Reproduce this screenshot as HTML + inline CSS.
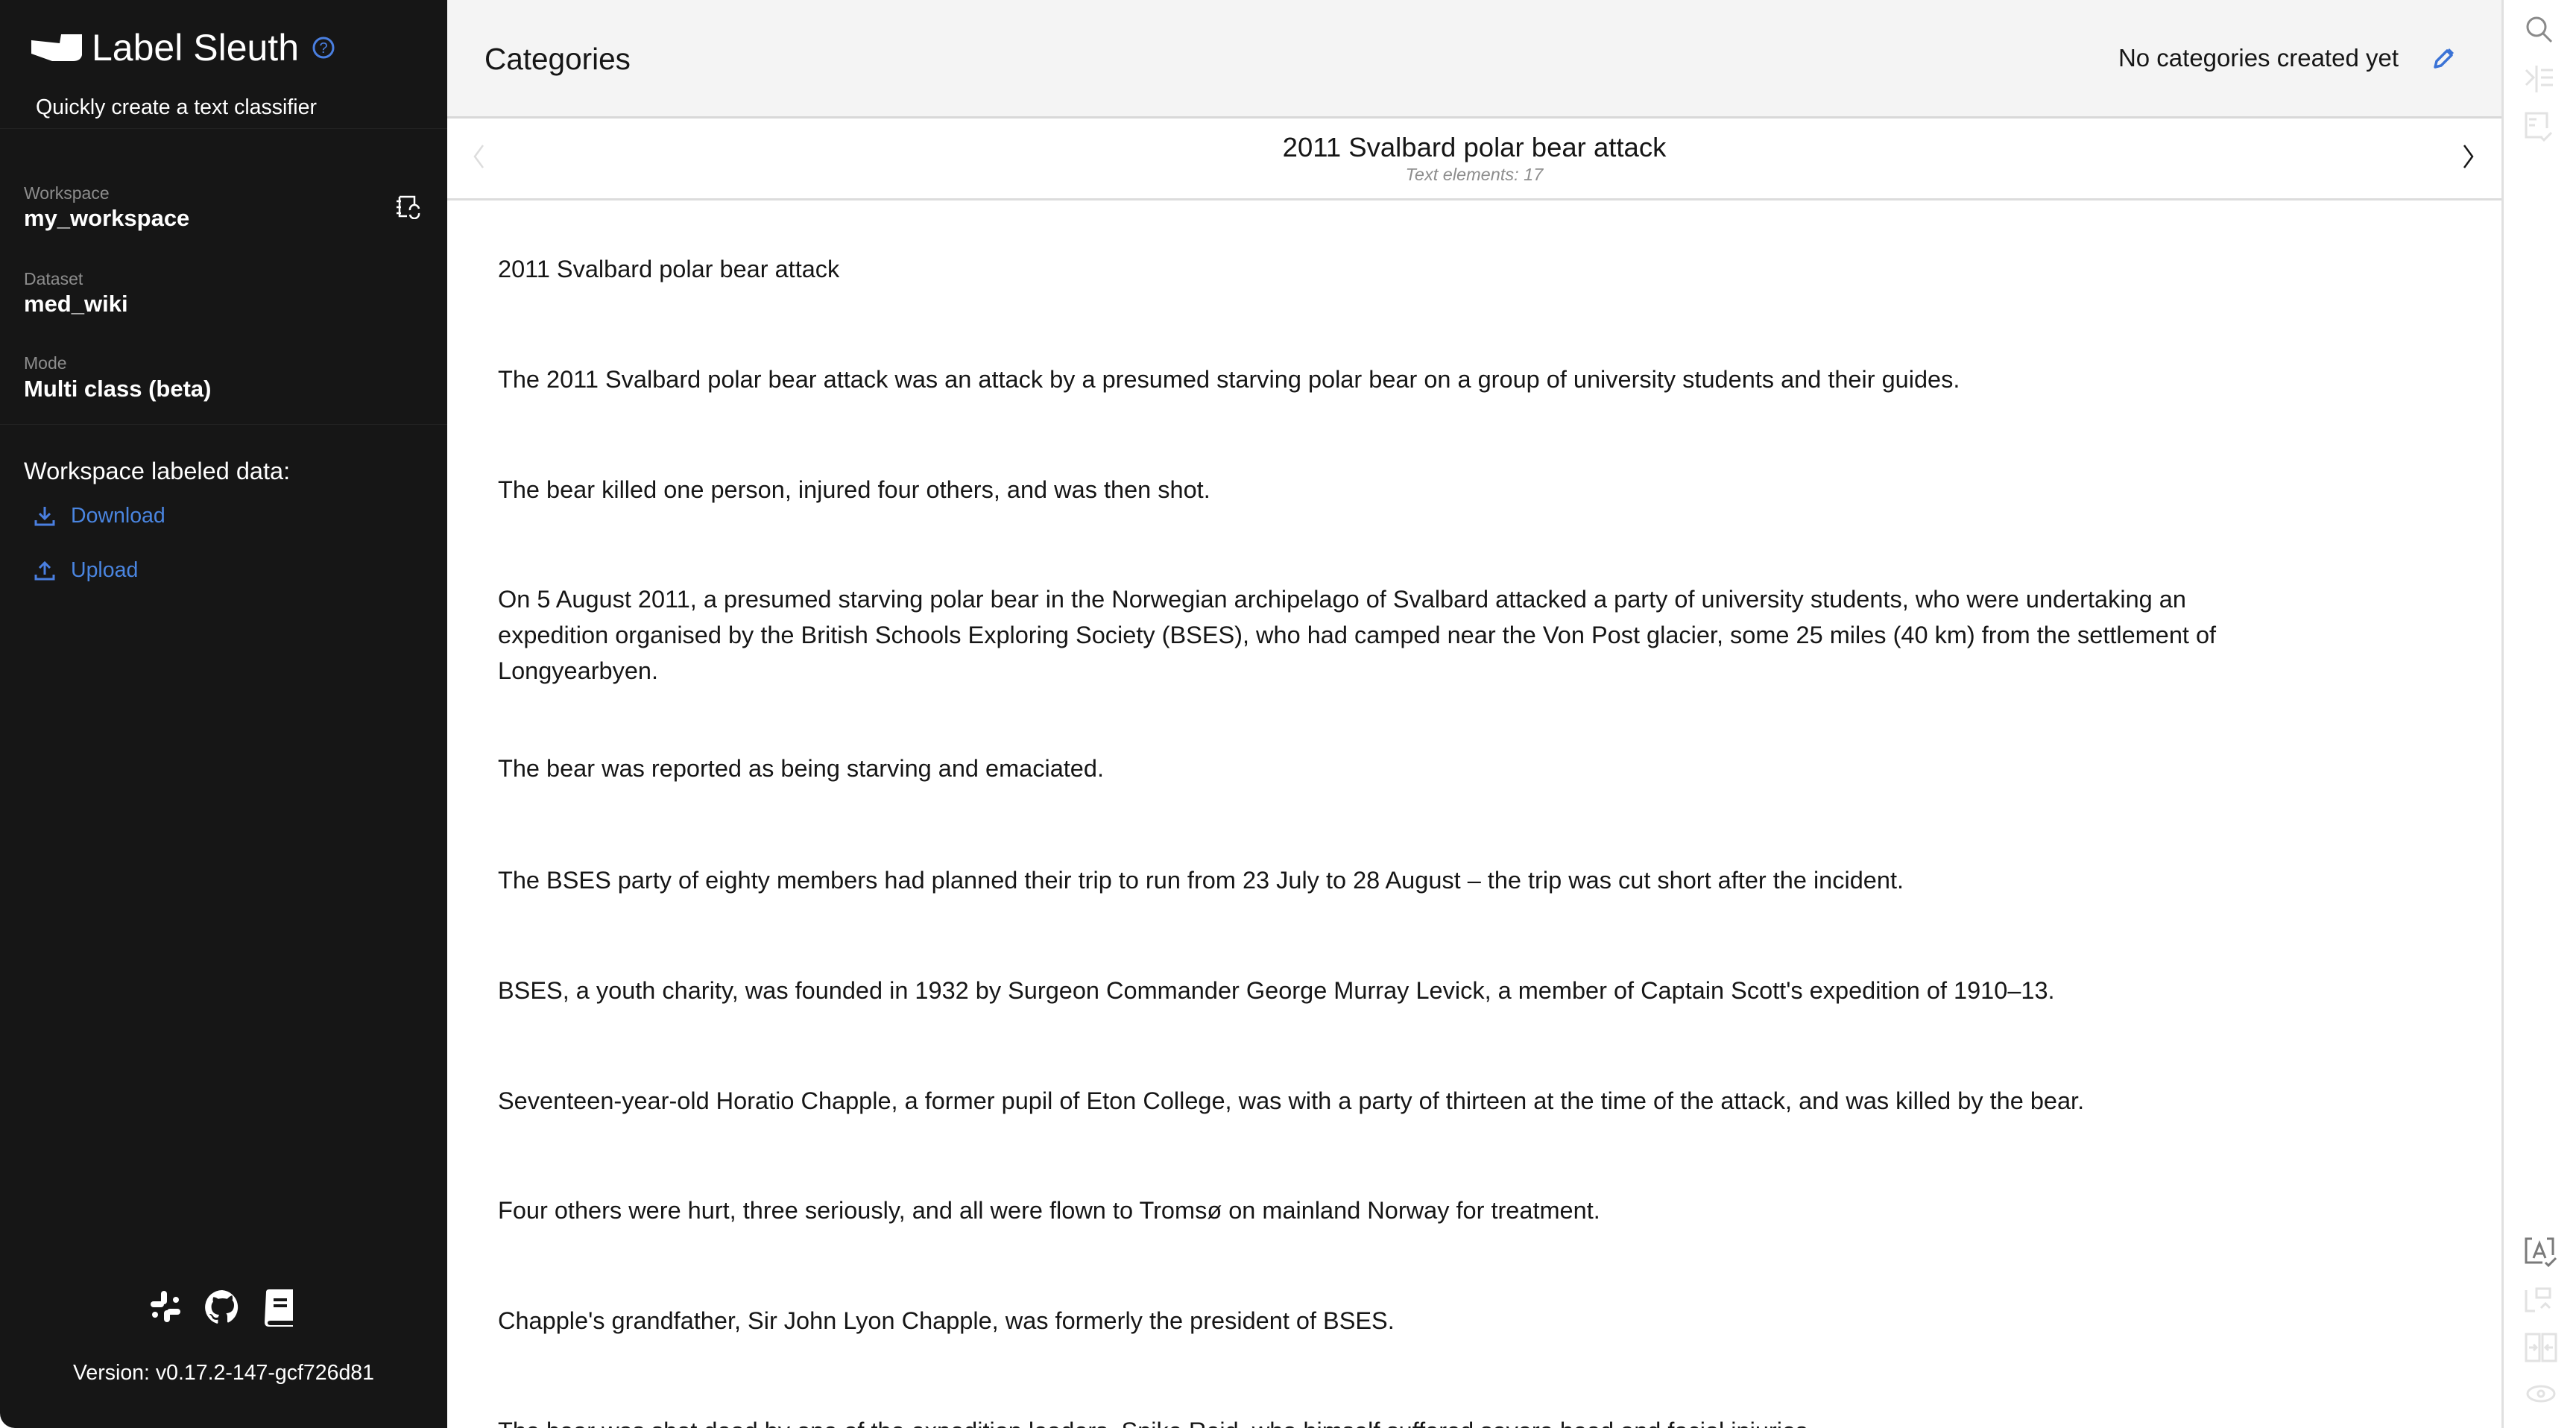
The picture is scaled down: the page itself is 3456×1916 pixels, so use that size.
<!DOCTYPE html>
<html><head><meta charset="utf-8"><style>
*{margin:0;padding:0;box-sizing:border-box}
html,body{width:3456px;height:1916px;overflow:hidden;background:#fff;font-family:"Liberation Sans",sans-serif;color:#161616}
#wrap{position:relative;width:3456px;height:1916px;overflow:hidden}
.side{position:absolute;left:0;top:0;width:600px;height:1916px;background:#161616;color:#fff;border-bottom-left-radius:20px}
.abs{position:absolute;white-space:nowrap}
.lbl{font-size:23px;color:#8d8d8d}
.val{font-size:31px;font-weight:bold}
.hdr{position:absolute;left:600px;top:0;width:2756px;height:159px;background:#f4f4f4;border-bottom:3px solid #d8d8d8}
.doch{position:absolute;left:600px;top:159px;width:2756px;height:110px;border-bottom:3px solid #dcdcdc;background:#fff}
.rail{position:absolute;left:3356px;top:0;width:100px;height:1916px;background:#fff;border-left:3px solid #e0e0e0}
.p{position:absolute;left:668px;font-size:32.5px;line-height:48px;white-space:nowrap;color:#161616}
</style></head><body><div id="wrap">
<div class="side">
  <svg class="abs" style="left:40px;top:44px" width="72" height="40" viewBox="0 0 72 40"><path d="M2 10 L40 14 L42 2 L70 2 L70 30 Q68 38 58 38 L30 38 L2 28 Z" fill="#fff"/></svg>
  <div class="abs" style="left:123px;top:35px;font-size:50px;line-height:58px">Label Sleuth</div>
  <svg class="abs" style="left:418px;top:48px" width="32" height="32" viewBox="0 0 32 32"><circle cx="16" cy="16" r="13" fill="none" stroke="#4a7fe0" stroke-width="3"/><text x="16" y="23" text-anchor="middle" font-size="20" fill="#4a7fe0" font-family="Liberation Sans">?</text></svg>
  <div class="abs" style="left:48px;top:128px;font-size:28.5px">Quickly create a text classifier</div>
  <div style="position:absolute;left:0;top:172px;width:600px;height:1px;background:#222"></div>
  <div class="abs lbl" style="left:32px;top:246px">Workspace</div>
  <div class="abs val" style="left:32px;top:275px">my_workspace</div>
  <svg class="abs" style="left:530px;top:262px" width="36" height="32" viewBox="0 0 36 32" fill="none" stroke="#fff" stroke-width="2.5"><path d="M6 2 H26 V12 M6 2 V28 H16 M2 8 H8 M2 16 H8 M2 24 H8"/><path d="M20 20 A6 6 0 0 1 32 18 M32 24 A6 6 0 0 1 20 26"/></svg>
  <div class="abs lbl" style="left:32px;top:361px">Dataset</div>
  <div class="abs val" style="left:32px;top:390px">med_wiki</div>
  <div class="abs lbl" style="left:32px;top:474px">Mode</div>
  <div class="abs val" style="left:32px;top:504px">Multi class (beta)</div>
  <div style="position:absolute;left:0;top:569px;width:600px;height:1px;background:#222"></div>
  <div class="abs" style="left:32px;top:614px;font-size:32.5px">Workspace labeled data:</div>
  <svg class="abs" style="left:44px;top:676px" width="32" height="32" viewBox="0 0 32 32" fill="none" stroke="#4a7fe0" stroke-width="3"><path d="M16 4 V20 M9 13 L16 20 L23 13 M4 22 V28 H28 V22"/></svg>
  <div class="abs" style="left:95px;top:676px;font-size:28.5px;color:#4a85e0">Download</div>
  <svg class="abs" style="left:44px;top:749px" width="32" height="32" viewBox="0 0 32 32" fill="none" stroke="#4a7fe0" stroke-width="3"><path d="M16 22 V6 M9 13 L16 6 L23 13 M4 22 V28 H28 V22"/></svg>
  <div class="abs" style="left:95px;top:749px;font-size:28.5px;color:#4a85e0">Upload</div>
  <svg class="abs" style="left:200px;top:1730px" width="44" height="46" viewBox="0 0 44 46" fill="#fff"><rect x="16" y="2" width="8" height="18" rx="4"/><rect x="2" y="16" width="18" height="8" rx="4"/><rect x="24" y="26" width="18" height="8" rx="4"/><rect x="20" y="28" width="8" height="16" rx="4"/><rect x="32" y="10" width="8" height="8" rx="4"/><rect x="4" y="30" width="8" height="8" rx="4"/></svg>
  <svg class="abs" style="left:274px;top:1730px" width="48" height="48" viewBox="0 0 24 24" fill="#fff"><path d="M12 .5a11.5 11.5 0 0 0-3.6 22.4c.6.1.8-.3.8-.6v-2c-3.2.7-3.9-1.4-3.9-1.4-.5-1.3-1.3-1.7-1.3-1.7-1-.7.1-.7.1-.7 1.2.1 1.8 1.2 1.8 1.2 1 1.8 2.8 1.3 3.5 1 .1-.8.4-1.3.7-1.6-2.6-.3-5.3-1.3-5.3-5.7 0-1.3.5-2.3 1.2-3.1-.1-.3-.5-1.5.1-3.1 0 0 1-.3 3.3 1.2a11.5 11.5 0 0 1 6 0C17.7 3.9 18.7 4.2 18.7 4.2c.6 1.6.2 2.8.1 3.1.8.8 1.2 1.8 1.2 3.1 0 4.4-2.7 5.4-5.3 5.7.4.4.8 1.1.8 2.2v3.3c0 .3.2.7.8.6A11.5 11.5 0 0 0 12 .5z"/></svg>
  <svg class="abs" style="left:353px;top:1728px" width="44" height="52" viewBox="0 0 44 52"><path d="M4 6 Q4 2 8 2 H40 V44 H10 Q6 44 6 47 Q6 50 10 50 H40 V52 H8 Q2 52 2 46 Z" fill="#fff"/><rect x="14" y="14" width="18" height="4" fill="#161616"/><rect x="14" y="22" width="18" height="4" fill="#161616"/></svg>
  <div class="abs" style="left:0;width:600px;text-align:center;top:1826px;font-size:28.5px">Version: v0.17.2-147-gcf726d81</div>
</div>

<div class="hdr">
  <div class="abs" style="left:50px;top:56px;font-size:40.5px">Categories</div>
  <div class="abs" style="right:138px;top:59px;font-size:33px">No categories created yet</div>
  <svg class="abs" style="left:2663px;top:64px" width="30" height="30" viewBox="0 0 30 30"><path d="M4 26 L6 18 L20 4 L26 10 L12 24 Z" fill="none" stroke="#3b73d6" stroke-width="3.5" stroke-linejoin="round"/><path d="M20 4 L23 1 L29 7 L26 10" fill="#3b73d6"/></svg>
</div>
<div class="doch">
  <svg class="abs" style="left:34px;top:34px" width="16" height="34" viewBox="0 0 16 34"><path d="M14 2 L3 17 L14 32" fill="none" stroke="#ddd" stroke-width="2.5"/></svg>
  <div class="abs" style="left:0;width:2756px;text-align:center;top:18px;font-size:36.5px">2011 Svalbard polar bear attack</div>
  <div class="abs" style="left:0;width:2756px;text-align:center;top:62px;font-size:23.5px;font-style:italic;color:#8d8d8d">Text elements: 17</div>
  <svg class="abs" style="left:2704px;top:34px" width="16" height="34" viewBox="0 0 16 34"><path d="M2 2 L13 17 L2 32" fill="none" stroke="#161616" stroke-width="2.5"/></svg>
</div>

<div class="p" style="top:337px">2011 Svalbard polar bear attack</div>
<div class="p" style="top:485px">The 2011 Svalbard polar bear attack was an attack by a presumed starving polar bear on a group of university students and their guides.</div>
<div class="p" style="top:633px">The bear killed one person, injured four others, and was then shot.</div>
<div class="p" style="top:780px">On 5 August 2011, a presumed starving polar bear in the Norwegian archipelago of Svalbard attacked a party of university students, who were undertaking an<br>expedition organised by the British Schools Exploring Society (BSES), who had camped near the Von Post glacier, some 25 miles (40 km) from the settlement of<br>Longyearbyen.</div>
<div class="p" style="top:1007px">The bear was reported as being starving and emaciated.</div>
<div class="p" style="top:1157px">The BSES party of eighty members had planned their trip to run from 23 July to 28 August – the trip was cut short after the incident.</div>
<div class="p" style="top:1305px">BSES, a youth charity, was founded in 1932 by Surgeon Commander George Murray Levick, a member of Captain Scott's expedition of 1910–13.</div>
<div class="p" style="top:1453px">Seventeen-year-old Horatio Chapple, a former pupil of Eton College, was with a party of thirteen at the time of the attack, and was killed by the bear.</div>
<div class="p" style="top:1600px">Four others were hurt, three seriously, and all were flown to Tromsø on mainland Norway for treatment.</div>
<div class="p" style="top:1748px">Chapple's grandfather, Sir John Lyon Chapple, was formerly the president of BSES.</div>
<div class="p" style="top:1896px">The bear was shot dead by one of the expedition leaders, Spike Reid, who himself suffered severe head and facial injuries.</div>

<div class="rail">
  <svg class="abs" style="left:28px;top:20px" width="40" height="40" viewBox="0 0 40 40" fill="none" stroke="#8a8a8a" stroke-width="3"><circle cx="16" cy="16" r="12"/><path d="M25 25 L36 36"/></svg>
  <svg class="abs" style="left:28px;top:86px" width="40" height="40" viewBox="0 0 40 40" fill="none" stroke="#e2e2e2" stroke-width="3"><path d="M2 8 L12 18 L2 28 M16 2 V38 M22 8 H38 M22 18 H38 M22 28 H38"/></svg>
  <svg class="abs" style="left:28px;top:150px" width="40" height="40" viewBox="0 0 40 40" fill="none" stroke="#e2e2e2" stroke-width="3"><path d="M24 34 H2 V2 H30 V22 M6 10 H16 M6 18 H14 M22 34 L26 38 L36 28"/></svg>
  <svg class="abs" style="left:28px;top:1660px" width="44" height="40" viewBox="0 0 44 40" fill="none" stroke="#7a7a7a" stroke-width="3"><path d="M10 2 H2 V34 H24 M30 2 H38 V24 M12 28 L20 8 L28 28 M15 22 H25 M28 34 L32 38 L42 28"/></svg>
  <svg class="abs" style="left:28px;top:1725px" width="40" height="40" viewBox="0 0 40 40" fill="none" stroke="#e2e2e2" stroke-width="3"><path d="M2 6 V34 H14 M16 4 H34 V16 H16 Z M22 30 L28 24 L34 30"/></svg>
  <svg class="abs" style="left:28px;top:1788px" width="44" height="40" viewBox="0 0 44 40" fill="none" stroke="#e2e2e2" stroke-width="3"><path d="M2 2 H20 V38 H2 Z M24 2 H42 V38 H24 Z M6 20 H16 M12 16 L16 20 L12 24 M38 20 H28 M32 16 L28 20 L32 24"/></svg>
  <svg class="abs" style="left:28px;top:1852px" width="44" height="36" viewBox="0 0 44 36" fill="none" stroke="#e2e2e2" stroke-width="3"><ellipse cx="22" cy="18" rx="18" ry="10"/><circle cx="22" cy="18" r="4"/></svg>
</div>
</div></body></html>
